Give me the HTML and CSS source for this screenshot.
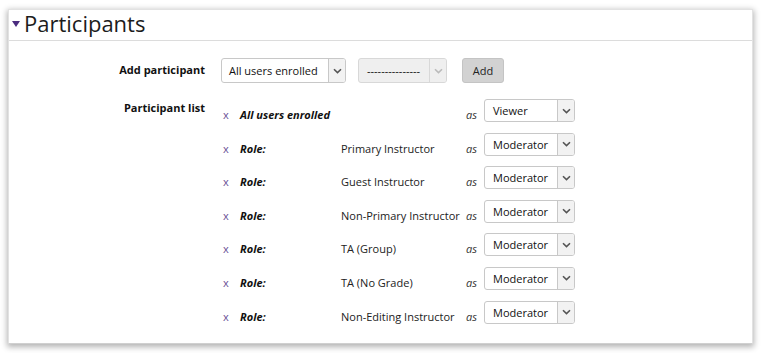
FILE: index.html
```html
<!DOCTYPE html>
<html lang="en">
<head>
    <meta charset="UTF-8">
    <title>Participants</title>
    <link rel="stylesheet" href="styles.css">
</head>
<body>
    <div class="panel">
        <h2 class="panel-title"><span class="caret-down"></span>Participants</h2>

        <div class="form">
            <div class="form-label">Add participant</div>
            <div class="add-row">
                <div class="select-box select-wide">
                    <span class="select-value">All users enrolled</span>
                    <span class="select-arrow"><svg width="9" height="6" viewBox="0 0 9 6"><path d="M1 1.2 L4.5 4.6 L8 1.2" fill="none" stroke="#555" stroke-width="1.6"/></svg></span>
                </div>
                <div class="select-box select-disabled">
                    <span class="select-value">---------------</span>
                    <span class="select-arrow"><svg width="9" height="6" viewBox="0 0 9 6"><path d="M1 1.2 L4.5 4.6 L8 1.2" fill="none" stroke="#bbb" stroke-width="1.6"/></svg></span>
                </div>
                <button class="btn-add">Add</button>
            </div>

            <div class="form-label list-label">Participant list</div>
            <div class="participant-list">
                <div class="participant">
                    <span class="remove">x</span>
                    <span class="ptype wide">All users enrolled</span>
                    <span class="as">as</span>
                    <div class="select-box select-role">
                        <span class="select-value">Viewer</span>
                        <span class="select-arrow"><svg width="9" height="6" viewBox="0 0 9 6"><path d="M1 1.2 L4.5 4.6 L8 1.2" fill="none" stroke="#555" stroke-width="1.6"/></svg></span>
                    </div>
                </div>
                <div class="participant">
                    <span class="remove">x</span>
                    <span class="ptype">Role:</span>
                    <span class="pname">Primary Instructor</span>
                    <span class="as">as</span>
                    <div class="select-box select-role">
                        <span class="select-value">Moderator</span>
                        <span class="select-arrow"><svg width="9" height="6" viewBox="0 0 9 6"><path d="M1 1.2 L4.5 4.6 L8 1.2" fill="none" stroke="#555" stroke-width="1.6"/></svg></span>
                    </div>
                </div>
                <div class="participant">
                    <span class="remove">x</span>
                    <span class="ptype">Role:</span>
                    <span class="pname">Guest Instructor</span>
                    <span class="as">as</span>
                    <div class="select-box select-role">
                        <span class="select-value">Moderator</span>
                        <span class="select-arrow"><svg width="9" height="6" viewBox="0 0 9 6"><path d="M1 1.2 L4.5 4.6 L8 1.2" fill="none" stroke="#555" stroke-width="1.6"/></svg></span>
                    </div>
                </div>
                <div class="participant">
                    <span class="remove">x</span>
                    <span class="ptype">Role:</span>
                    <span class="pname">Non-Primary Instructor</span>
                    <span class="as">as</span>
                    <div class="select-box select-role">
                        <span class="select-value">Moderator</span>
                        <span class="select-arrow"><svg width="9" height="6" viewBox="0 0 9 6"><path d="M1 1.2 L4.5 4.6 L8 1.2" fill="none" stroke="#555" stroke-width="1.6"/></svg></span>
                    </div>
                </div>
                <div class="participant">
                    <span class="remove">x</span>
                    <span class="ptype">Role:</span>
                    <span class="pname">TA (Group)</span>
                    <span class="as">as</span>
                    <div class="select-box select-role">
                        <span class="select-value">Moderator</span>
                        <span class="select-arrow"><svg width="9" height="6" viewBox="0 0 9 6"><path d="M1 1.2 L4.5 4.6 L8 1.2" fill="none" stroke="#555" stroke-width="1.6"/></svg></span>
                    </div>
                </div>
                <div class="participant">
                    <span class="remove">x</span>
                    <span class="ptype">Role:</span>
                    <span class="pname">TA (No Grade)</span>
                    <span class="as">as</span>
                    <div class="select-box select-role">
                        <span class="select-value">Moderator</span>
                        <span class="select-arrow"><svg width="9" height="6" viewBox="0 0 9 6"><path d="M1 1.2 L4.5 4.6 L8 1.2" fill="none" stroke="#555" stroke-width="1.6"/></svg></span>
                    </div>
                </div>
                <div class="participant">
                    <span class="remove">x</span>
                    <span class="ptype">Role:</span>
                    <span class="pname">Non-Editing Instructor</span>
                    <span class="as">as</span>
                    <div class="select-box select-role">
                        <span class="select-value">Moderator</span>
                        <span class="select-arrow"><svg width="9" height="6" viewBox="0 0 9 6"><path d="M1 1.2 L4.5 4.6 L8 1.2" fill="none" stroke="#555" stroke-width="1.6"/></svg></span>
                    </div>
                </div>
            </div>
        </div>
    </div>
</body>
</html>
```

FILE: styles.css
```css
body {
    font-family: "Open Sans", "DejaVu Sans", sans-serif;
    font-size: 11px;
    color: #222;
    margin: 0;
    padding: 9px 8px;
    background-color: #fff;
}
.panel {
    background-color: #fff;
    border: 1px solid #e2e2e2;
    border-bottom-color: #d0d0d0;
    box-shadow: 0 2px 6px 1px rgba(0, 0, 0, 0.3);
    padding-bottom: 19px;
}
.panel-title {
    margin: 0;
    font-size: 22px;
    font-weight: normal;
    color: #1c1c1c;
    height: 30px;
    line-height: 27px;
    padding-left: 3px;
    padding-bottom: 0;
    border-bottom: 1px solid #dcdcdc;
    display: flex;
    align-items: flex-start;
}
.caret-down {
    width: 0;
    height: 0;
    border-left: 4.5px solid transparent;
    border-right: 4.5px solid transparent;
    border-top: 6px solid #4b2d7f;
    margin-right: 4px;
    margin-top: 11px;
}
.form {
    display: grid;
    grid-template-columns: 196px 1fr;
    column-gap: 16px;
    padding-top: 17px;
}
.form-label {
    font-weight: bold;
    text-align: right;
    line-height: 24px;
    color: #111;
}
.list-label {
    margin-top: 16px;
    line-height: 18px;
}
.add-row {
    display: flex;
    align-items: center;
}
.select-box {
    display: flex;
    height: 23px;
    border: 1px solid #c8c8c8;
    border-radius: 3px;
    box-sizing: border-box;
    background-color: #fff;
    color: #111;
}
.select-value {
    flex: 1;
    padding-left: 8px;
    line-height: 22px;
    white-space: nowrap;
}
.select-arrow {
    width: 16px;
    border-left: 1px solid #c8c8c8;
    background-color: #f2f2f2;
    display: flex;
    align-items: center;
    justify-content: center;
    border-radius: 0 2px 2px 0;
}
.select-wide {
    width: 125px;
    height: 25px;
}
.select-wide .select-value {
    line-height: 24px;
    padding-left: 7px;
}
.select-disabled {
    width: 89px;
    height: 25px;
    margin-left: 12px;
    background-color: #efefef;
    border-color: #d8d8d8;
}
.select-disabled .select-value {
    line-height: 24px;
}
.select-disabled .select-arrow {
    border-left-color: #d8d8d8;
    background-color: #efefef;
}
.btn-add {
    margin-left: 15px;
    height: 25px;
    width: 42px;
    font-family: inherit;
    font-size: 11px;
    color: #222;
    background-color: #d2d2d2;
    border: 1px solid #c4c4c4;
    border-radius: 3px;
    padding: 0;
}
.participant-list {
    margin-top: 16px;
    display: flex;
    flex-direction: column;
    gap: 10.6px;
}
.participant {
    display: grid;
    grid-template-columns: 19px 101px 125px 18px 91px;
    align-items: start;
}
.participant > span {
    padding-top: 8px;
    line-height: 15px;
    white-space: nowrap;
}
.remove {
    color: #6a4e95;
    padding-left: 2px;
}
.ptype {
    font-weight: bold;
    font-style: italic;
    color: #111;
}
.ptype.wide {
    grid-column: 2 / 4;
}
.pname {
    color: #222;
}
.as {
    font-style: italic;
    color: #333;
}
.select-role {
    width: 91px;
}
```
